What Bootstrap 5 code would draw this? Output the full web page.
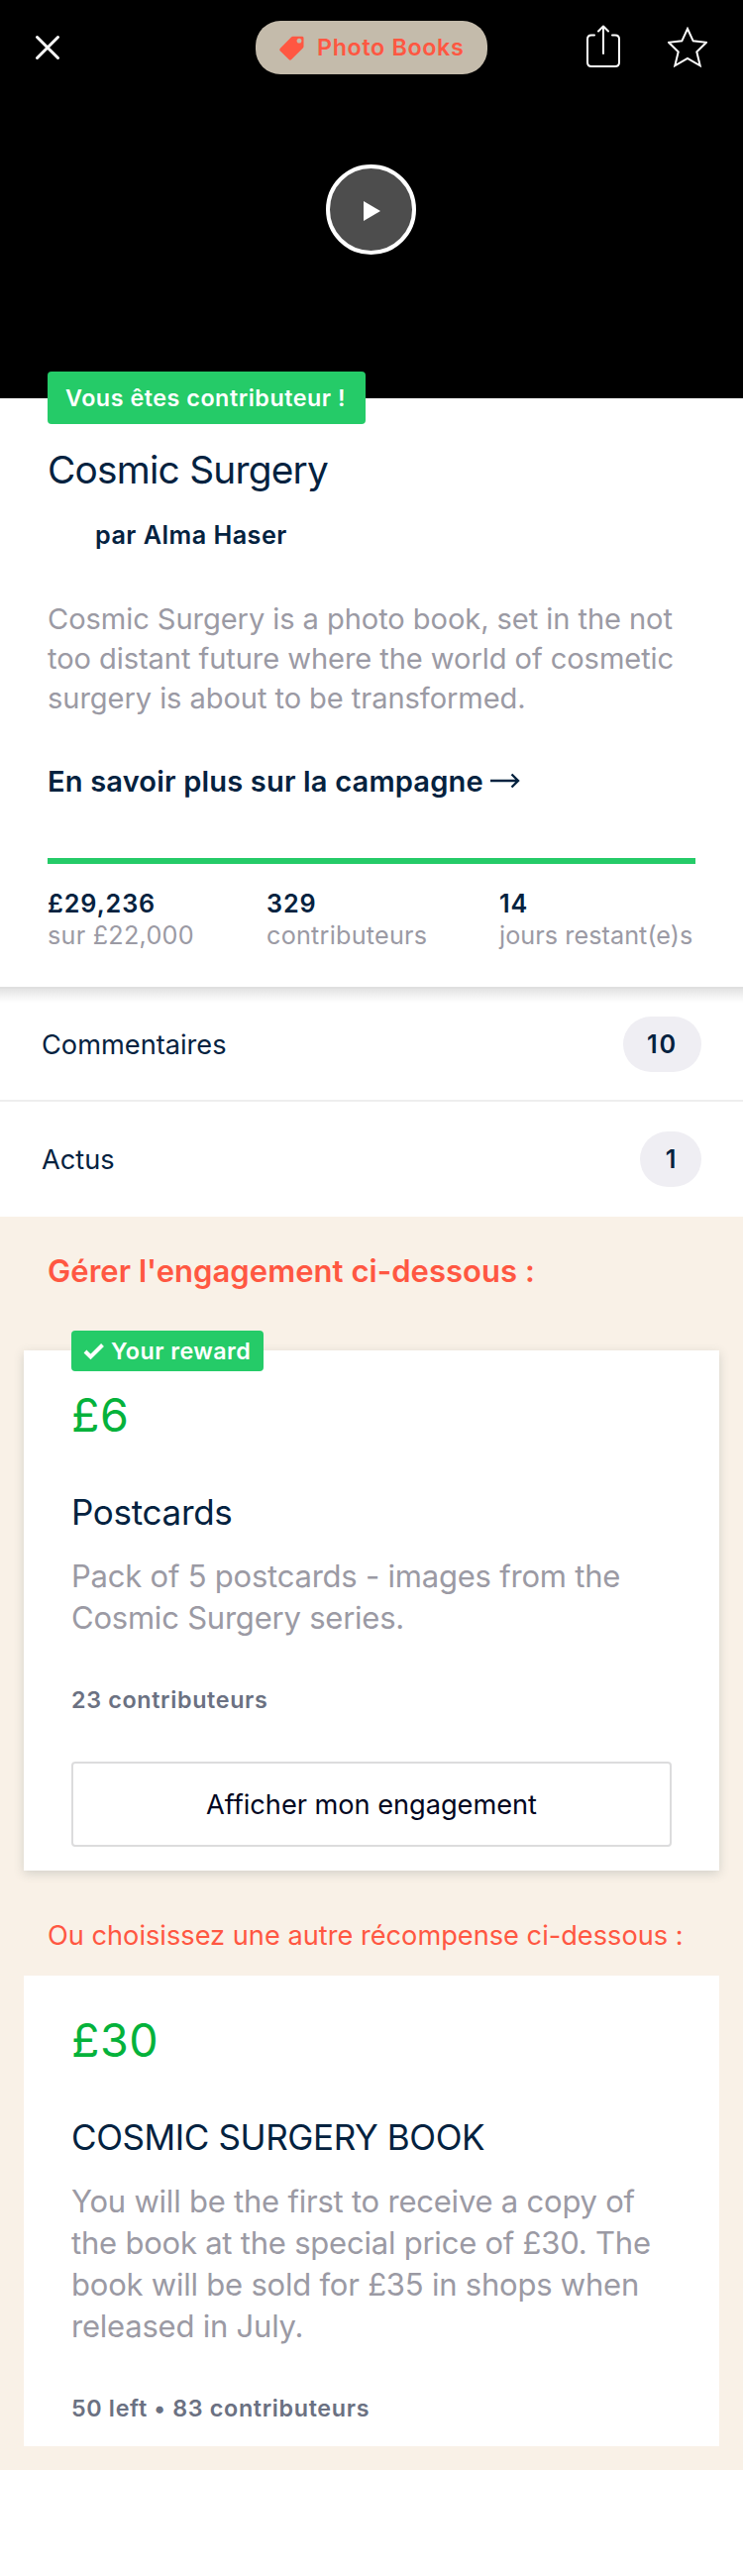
<!DOCTYPE html>
<html lang="fr">
<head>
<meta charset="utf-8">
<meta name="viewport" content="width=device-width, initial-scale=1">
<title>Cosmic Surgery</title>
<link href="https://cdn.jsdelivr.net/npm/bootstrap@5.3.0/dist/css/bootstrap.min.css" rel="stylesheet">
<style>
  :root { --navy: #04223f; --green: #25cb68; --coral: #ff5742; --sand: #f9f1e7; --soft: #9b9aa4; }
  body { font-family: Inter, "Liberation Sans", sans-serif; color: var(--navy); background: #fff; }
  svg { display: block; flex: none; }
  h1, h2, h3, p { margin: 0; font-weight: 400; }
  .text-soft { color: var(--soft); }
  .text-coral { color: var(--coral); }

  .hero { height: 402px; background: #000; }
  .topbar { display: grid; grid-template-columns: 1fr auto 1fr; padding: 21px 36px 0 36px; height: 75px; }
  .close-link { margin: 11px 0 0 -4px; }
  .category { height: 54px; width: 234px; border-radius: 25px; background: #c4bbab; color: var(--coral); font-size: 23.3px; font-weight: 600; letter-spacing: .65px; padding-left: 24px; }
  .category span { margin: 1px 0 0 13px; }
  .share { margin: 4px 48px 0 0; }
  .star { margin-top: 6px; }
  .play { width: 91px; height: 91px; border: 4px solid #fff; border-radius: 50%; background: #4d4d4d; margin: 91px auto 0 329px; }
  .play svg { margin: 2px 0 0 2px; }

  .tag-backer { height: 53px; width: 321px; padding: 2px 0 0 18px; margin-top: -27px; border-radius: 4px; background: var(--green); font-size: 23.3px; font-weight: 600; letter-spacing: .535px; }
  .campaign { padding: 0 48px 36px; }
  .campaign h1 { margin-top: 22px; font-size: 38.8px; line-height: 48px; letter-spacing: -.77px; }
  .author { margin: 26px 0 0 48px; font-size: 25.2px; line-height: 32px; letter-spacing: .47px; }
  .blurb { margin-top: 49px; font-size: 29.1px; line-height: 40px; letter-spacing: -.08px; }
  .more { margin-top: 44px; font-size: 29.1px; line-height: 40px; letter-spacing: .148px; color: var(--navy); }
  .more svg { margin: -2px 0 0 7px; }
  .funding { margin-top: 57px; height: 6px; border-radius: 0; --bs-progress-bar-bg: var(--green); }
  .stats { display: grid; grid-template-columns: 221px 235px auto; margin-top: 24px; font-size: 25.2px; line-height: 32px; white-space: nowrap; }
  .stats strong { display: block; font-weight: 600; letter-spacing: .9px; }
  .stats .ls-a { letter-spacing: .24px; }
  .stats .ls-b { letter-spacing: .06px; }

  .links { border-top: 2px solid #dfdfdf; background: linear-gradient(#e3e3e3, #f6f6f6 9px, #fff 14px); }
  .links a { padding: 0 42px; font-size: 27.2px; color: var(--navy); height: 112px; }
  .links a + a { border-top: 2px solid #eee; height: 118px; background: #fff; }
  .links a > span:first-child { padding-top: 2px; }
  .links .count { height: 56px; padding-top: 2px; border-radius: 28px; background: #efeef3; font-size: 25.2px; font-weight: 600; letter-spacing: 1.8px; width: 79px; }
  .links .count.one { width: 62px; letter-spacing: 0; }

  .rewards { background: var(--sand); padding: 35px 24px 24px; }
  .rewards h2 { margin-left: 24px; font-size: 31px; line-height: 40px; font-weight: 600; letter-spacing: .05px; }
  .other { margin: 48px 0 22px 24px; font-size: 27.2px; line-height: 36px; white-space: nowrap; }
  .reward { position: relative; background: #fff; padding: 37px 48px 24px; }
  .reward.mine { margin-top: 60px; box-shadow: 0 3px 10px rgba(60, 80, 80, .2); }
  .tag-mine { position: absolute; left: 48px; top: -20px; width: 194px; height: 41px; padding-left: 12px; border-radius: 4px; background: var(--green); color: #fff; font-size: 23.3px; font-weight: 600; letter-spacing: .46px; }
  .tag-mine span { margin: 2px 0 0 6px; }
  .price { font-size: 46.6px; line-height: 56px; letter-spacing: .5px; color: #05b23b; }
  .reward h3 { margin-top: 48px; font-size: 35px; line-height: 44px; letter-spacing: -.3px; }
  .reward h3.caps { letter-spacing: -.394px; }
  .detail { margin-top: 22px; font-size: 31px; line-height: 42px; letter-spacing: -.22px; }
  .backers { margin-top: 48px; font-size: 23.3px; line-height: 28px; font-weight: 600; letter-spacing: .66px; color: #6b7182; }
  .reward .btn-pledge { margin-top: 48px; height: 86px; border: 2px solid #dcdcdd; border-radius: 4px; background: #fff; color: #020621; font-size: 27.2px; letter-spacing: -.03px; padding: 2px 0 0; }
</style>
</head>
<body>
<header class="hero">
  <div class="topbar">
    <a href="#" class="close-link align-self-start" aria-label="Fermer">
      <svg width="32" height="32" viewBox="0 0 32 32" stroke="#fff" stroke-width="3" stroke-linecap="round"><path d="M5.500 5.500l21 21M26.500 5.500l-21 21"/></svg>
    </a>
    <div class="category d-flex align-items-center">
      <svg width="25" height="25" viewBox="0 0 25 25" fill="#ff5742"><path fill-rule="evenodd" d="M13.7 .7H23q1.500 0 1.500 1.500v8.600q0 1-.7 1.700L12.200 24.100q-1.300 1.200-2.600 0L.9 15.500q-1.300-1.300 0-2.700L12 1.400q.7-.7 1.700-.7zM20 2.800a2.400 2.400 0 1 0 .01 0z"/></svg>
      <span>Photo Books</span>
    </div>
    <div class="d-flex justify-content-end">
      <svg class="share" width="34" height="44" viewBox="0 0 34 44" fill="none" stroke="#fff" stroke-width="2" stroke-linecap="round" stroke-linejoin="round"><path d="M8 10.500H5Q1 10.500 1 14.500V38Q1 42 5 42H29Q33 42 33 38V14.500Q33 10.500 29 10.500H26M17 29V2M12 6.500L17 1.500L22 6.500"/></svg>
      <svg class="star" width="40" height="42" viewBox="0 0 40 42" fill="none" stroke="#fff" stroke-width="2"><path d="M20 2L25.700 14.300L39 15.800L29.300 25.200L32.700 39.300L20 32L7.300 39.300L10.700 25.200L1 15.800L14.300 14.300Z"/></svg>
    </div>
  </div>
  <div class="play d-flex align-items-center justify-content-center">
    <svg width="17" height="20" viewBox="0 0 17 20" fill="#fff"><path d="M0 0L17 10L0 20Z"/></svg>
  </div>
</header>

<main>
  <section class="campaign">
    <div class="tag-backer position-relative d-flex align-items-center text-white">Vous êtes contributeur&nbsp;!</div>
    <h1>Cosmic Surgery</h1>
    <p class="author fw-semibold">par Alma Haser</p>
    <p class="blurb text-soft">Cosmic Surgery is a photo book, set in the not<br>too distant future where the world of cosmetic<br>surgery is about to be transformed.</p>
    <a href="#" class="more d-flex align-items-center fw-semibold text-decoration-none">En savoir plus sur la campagne
      <svg width="30" height="16" viewBox="0 0 30 16" fill="none" stroke="#04223f" stroke-width="2.400"><path d="M0 8H28M21.500 1.500L28 8L21.500 14.500"/></svg>
    </a>
    <div class="funding progress" role="progressbar" aria-label="Financement"><div class="progress-bar w-100"></div></div>
    <div class="stats">
      <div><strong>£29,236</strong><span class="text-soft ls-a">sur £22,000</span></div>
      <div><strong>329</strong><span class="text-soft ls-a">contributeurs</span></div>
      <div><strong>14</strong><span class="text-soft ls-b">jours restant(e)s</span></div>
    </div>
  </section>

  <nav class="links">
    <a href="#" class="d-flex align-items-center justify-content-between text-decoration-none"><span>Commentaires</span><span class="count d-flex align-items-center justify-content-center">10</span></a>
    <a href="#" class="d-flex align-items-center justify-content-between text-decoration-none"><span>Actus</span><span class="count one d-flex align-items-center justify-content-center">1</span></a>
  </nav>

  <section class="rewards">
    <h2 class="text-coral">Gérer l'engagement ci-dessous :</h2>
    <article class="reward mine">
      <div class="tag-mine d-flex align-items-center">
        <svg width="22" height="18" viewBox="0 0 22 18" fill="none" stroke="#fff" stroke-width="4"><path d="M2 9L7.500 14.500L19.500 2.500"/></svg>
        <span>Your reward</span>
      </div>
      <p class="price">£6</p>
      <h3>Postcards</h3>
      <p class="detail text-soft">Pack of 5 postcards - images from the<br>Cosmic Surgery series.</p>
      <p class="backers">23 contributeurs</p>
      <button type="button" class="btn btn-pledge w-100 d-block">Afficher mon engagement</button>
    </article>
    <p class="other text-coral">Ou choisissez une autre récompense ci-dessous :</p>
    <article class="reward">
      <p class="price">£30</p>
      <h3 class="caps">COSMIC SURGERY BOOK</h3>
      <p class="detail text-soft">You will be the first to receive a copy of<br>the book at the special price of £30. The<br>book will be sold for £35 in shops when<br>released in July.</p>
      <p class="backers">50 left • 83 contributeurs</p>
    </article>
  </section>
</main>
<script src="https://cdn.jsdelivr.net/npm/bootstrap@5.3.0/dist/js/bootstrap.bundle.min.js"></script>
</body>
</html>
